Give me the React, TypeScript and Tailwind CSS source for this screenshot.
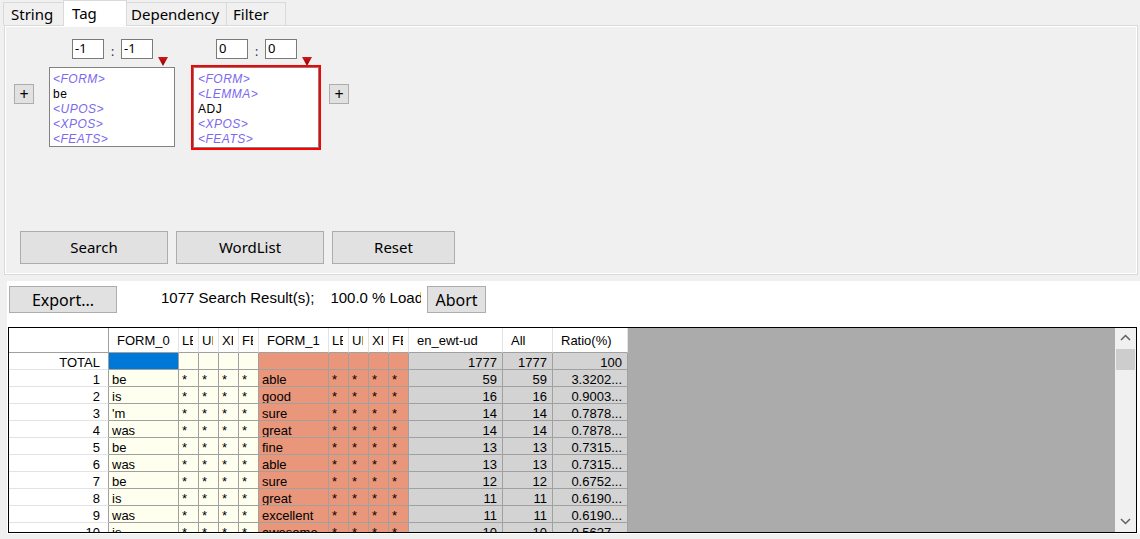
import React from "react";

type Col = { name: string; w: string; bg: string; narrow: boolean; num: boolean };

const COLS: Col[] = [
  { name: "FORM_0", w: "w-[70px]", bg: "bg-[#fffff0]", narrow: false, num: false },
  { name: "LEMMA_0", w: "w-[20px]", bg: "bg-[#fffff0]", narrow: true, num: false },
  { name: "UPOS_0", w: "w-[20px]", bg: "bg-[#fffff0]", narrow: true, num: false },
  { name: "XPOS_0", w: "w-[20px]", bg: "bg-[#fffff0]", narrow: true, num: false },
  { name: "FEATS_0", w: "w-[20px]", bg: "bg-[#fffff0]", narrow: true, num: false },
  { name: "FORM_1", w: "w-[70px]", bg: "bg-[#e9967a]", narrow: false, num: false },
  { name: "LEMMA_1", w: "w-[20px]", bg: "bg-[#e9967a]", narrow: true, num: false },
  { name: "UPOS_1", w: "w-[20px]", bg: "bg-[#e9967a]", narrow: true, num: false },
  { name: "XPOS_1", w: "w-[20px]", bg: "bg-[#e9967a]", narrow: true, num: false },
  { name: "FEATS_1", w: "w-[20px]", bg: "bg-[#e9967a]", narrow: true, num: false },
  { name: "en_ewt-ud", w: "w-[94px]", bg: "bg-[#d3d3d3]", narrow: false, num: true },
  { name: "All", w: "w-[50px]", bg: "bg-[#d3d3d3]", narrow: false, num: true },
  { name: "Ratio(%)", w: "w-[75px]", bg: "bg-[#d3d3d3]", narrow: false, num: true },
];

const DATA: string[][] = [
  ["1", "be", "able", "59", "59", "3.3202..."],
  ["2", "is", "good", "16", "16", "0.9003..."],
  ["3", "'m", "sure", "14", "14", "0.7878..."],
  ["4", "was", "great", "14", "14", "0.7878..."],
  ["5", "be", "fine", "13", "13", "0.7315..."],
  ["6", "was", "able", "13", "13", "0.7315..."],
  ["7", "be", "sure", "12", "12", "0.6752..."],
  ["8", "is", "great", "11", "11", "0.6190..."],
  ["9", "was", "excellent", "11", "11", "0.6190..."],
  ["10", "is", "awesome", "10", "10", "0.5627..."],
];

function Marker() {
  return (
    <svg width="10" height="9" viewBox="0 0 10 9">
      <defs>
        <linearGradient id="mk" x1="0" y1="0" x2="0" y2="1">
          <stop offset="0" stopColor="#d01818" />
          <stop offset="1" stopColor="#8a0000" />
        </linearGradient>
      </defs>
      <polygon points="0,0 10,0 5,9" fill="url(#mk)" />
    </svg>
  );
}

function SmallInput({ value }: { value: string }) {
  return (
    <div className="w-[32px] h-[20px] border border-[#7a7a7a] bg-white pl-[2px] text-[13px] leading-[17px] font-['Noto_Sans',sans-serif] text-black">
      {value}
    </div>
  );
}

function Ph({ t }: { t: string }) {
  return <div className="italic text-[#7b68ee] tracking-[0.5px]">{t}</div>;
}
function Val({ t }: { t: string }) {
  return <div className="text-black tracking-[0.5px]">{t}</div>;
}

function PlusBtn() {
  return (
    <div className="w-[20px] h-[20px] border border-[#adadad] bg-[#e1e1e1] flex items-center justify-center text-[16px] leading-[16px] font-['Noto_Sans',sans-serif] text-black">
      +
    </div>
  );
}

function Btn({ label, w }: { label: string; w: string }) {
  return (
    <div
      className={`${w} h-[33px] border border-[#adadad] bg-[#e1e1e1] flex items-center justify-center text-[15px] font-['Noto_Sans',sans-serif] text-black`}
    >
      {label}
    </div>
  );
}

function DataCell({ col, text, blue }: { col: Col; text: string; blue?: boolean }) {
  const bg = blue ? "bg-[#0078d7]" : col.bg;
  return (
    <div className={`${col.w} ${bg} shrink-0 h-[17px] border-r border-b border-[#a0a0a0] overflow-hidden`}>
      <div
        className={
          col.num
            ? "pt-[2px] leading-[16px] whitespace-nowrap text-right pr-[5px]"
            : "pt-[2px] leading-[16px] whitespace-nowrap pl-[3px]"
        }
      >
        {text}
      </div>
    </div>
  );
}

export default function App() {
  return (
    <div className="w-[1140px] h-[539px] bg-[#f0f0f0] overflow-hidden flex flex-col font-['Noto_Sans',sans-serif] text-black">
      {/* Tabs */}
      <div className="relative z-10 flex items-start h-[25px] pl-[3px] text-[15px] leading-[20px]">
        <div className="mt-[2px] h-[23px] w-[61px] border border-b-0 border-[#d9d9d9] bg-[#f0f0f0] pl-[7px] pt-[1px]">
          String
        </div>
        <div className="h-[26px] w-[64px] -ml-px border border-b-0 border-[#d9d9d9] bg-white pl-[8px] pt-[2px]">
          Tag
        </div>
        <div className="mt-[2px] h-[23px] w-[101px] -ml-px border border-b-0 border-[#d9d9d9] bg-[#f0f0f0] pl-[4px] pt-[1px]">
          Dependency
        </div>
        <div className="mt-[2px] h-[23px] w-[60px] -ml-px border border-b-0 border-[#d9d9d9] bg-[#f0f0f0] pl-[6px] pt-[1px]">
          Filter
        </div>
      </div>

      {/* Tab panel */}
      <div className="ml-[4px] w-[1134px] h-[250px] border border-[#d9d9d9] shrink-0">
        <div className="h-full border border-white flex flex-col">
          <div className="flex items-start pl-[8px]">
            <div className="mt-[57px]">
              <PlusBtn />
            </div>

            {/* token 0 */}
            <div className="ml-[15px] mt-[12px] w-[126px] flex flex-col">
              <div className="flex items-start pl-[23px] h-[20px]">
                <SmallInput value="-1" />
                <div className="w-[17px] text-center text-[12px] leading-[12px] pt-[7px] text-[#333]">:</div>
                <SmallInput value="-1" />
              </div>
              <div className="-mt-[2px] ml-[109px] h-[8px] overflow-visible">
                <Marker />
              </div>
              <div className="mt-[2px] w-[126px] h-[80px] border border-[#828282] bg-white pl-[3px] pt-[4px] text-[12px] leading-[15px] font-['Liberation_Sans',sans-serif]">
                <Ph t="<FORM>" />
                <Val t="be" />
                <Ph t="<UPOS>" />
                <Ph t="<XPOS>" />
                <Ph t="<FEATS>" />
              </div>
            </div>

            {/* token 1 */}
            <div className="ml-[16px] mt-[12px] flex flex-col">
              <div className="flex items-start pl-[25px] h-[20px]">
                <SmallInput value="0" />
                <div className="w-[17px] text-center text-[12px] leading-[12px] pt-[7px] text-[#333]">:</div>
                <SmallInput value="0" />
              </div>
              <div className="-mt-[2px] ml-[111px] h-[8px] overflow-visible">
                <Marker />
              </div>
              <div className="w-[130px] h-[85px] border-2 border-[#ff0000]">
                <div className="h-full border border-[#828282] bg-white pl-[4px] pt-[4px] text-[12px] leading-[15px] font-['Liberation_Sans',sans-serif]">
                  <Ph t="<FORM>" />
                  <Ph t="<LEMMA>" />
                  <Val t="ADJ" />
                  <Ph t="<XPOS>" />
                  <Ph t="<FEATS>" />
                </div>
              </div>
            </div>

            <div className="ml-[8px] mt-[57px]">
              <PlusBtn />
            </div>
          </div>

          <div className="mt-auto mb-[9px] pl-[14px] flex gap-[8px]">
            <Btn label="Search" w="w-[148px]" />
            <Btn label="WordList" w="w-[148px]" />
            <Btn label="Reset" w="w-[123px]" />
          </div>
        </div>
      </div>

      {/* Results area */}
      <div className="mt-[6px] ml-[7px] w-[1133px] h-[253px] bg-white flex flex-col shrink-0">
        <div className="flex items-start h-[32px]">
          <div className="ml-[2px] mt-[5px] w-[108px] h-[27px] border border-[#adadad] bg-[#e1e1e1] flex items-center justify-center text-[16px] font-['Noto_Sans',sans-serif]">
            Export...
          </div>
          <div className="ml-[44px] mt-[8px] w-[260px] overflow-hidden whitespace-nowrap flex text-[15px] leading-[17px] font-['Liberation_Sans',sans-serif]">
            <span>1077 Search Result(s);</span>
            <span className="ml-[16px]">100.0 % Loaded</span>
          </div>
          <div className="ml-[6px] mt-[5px] w-[59px] h-[27px] border border-[#adadad] bg-[#e1e1e1] flex items-center justify-center text-[16px] font-['Noto_Sans',sans-serif]">
            Abort
          </div>
        </div>

        {/* Grid */}
        <div className="mt-[14px] ml-[1px] w-[1129px] h-[206px] border border-black flex overflow-hidden font-['Liberation_Sans',sans-serif] text-[13px]">
          <div className="flex flex-col shrink-0">
            {/* header */}
            <div className="flex h-[25px]">
              <div className="w-[100px] h-[25px] border-r border-r-[#a0a0a0] border-b border-b-[#a0a0a0] bg-white shrink-0" />
              {COLS.map((c) => (
                <div
                  key={c.name}
                  className={`${c.w} h-[25px] shrink-0 bg-white border-r border-r-[#e3e3e3] border-b border-b-[#a0a0a0] overflow-hidden`}
                >
                  {c.narrow ? (
                    <div className="ml-[3px] w-[11px] overflow-hidden whitespace-nowrap pt-[3px] leading-[20px]">
                      {c.name}
                    </div>
                  ) : (
                    <div className="pl-[8px] whitespace-nowrap pt-[3px] leading-[20px]">{c.name}</div>
                  )}
                </div>
              ))}
            </div>
            {/* TOTAL */}
            <div className="flex">
              <div className="w-[100px] h-[17px] shrink-0 bg-white border-r border-r-[#a0a0a0] border-b border-b-[#e3e3e3] overflow-hidden">
                <div className="pt-[2px] leading-[16px] text-right pr-[8px]">TOTAL</div>
              </div>
              {COLS.map((c, i) => (
                <DataCell
                  key={c.name}
                  col={c}
                  blue={i === 0}
                  text={i === 10 ? "1777" : i === 11 ? "1777" : i === 12 ? "100" : ""}
                />
              ))}
            </div>
            {DATA.map((r) => (
              <div className="flex" key={r[0]}>
                <div className="w-[100px] h-[17px] shrink-0 bg-white border-r border-r-[#a0a0a0] border-b border-b-[#e3e3e3] overflow-hidden">
                  <div className="pt-[2px] leading-[16px] text-right pr-[8px]">{r[0]}</div>
                </div>
                {COLS.map((c, i) => {
                  let t = "*";
                  if (i === 0) t = r[1];
                  else if (i === 5) t = r[2];
                  else if (i === 10) t = r[3];
                  else if (i === 11) t = r[4];
                  else if (i === 12) t = r[5];
                  return <DataCell key={c.name} col={c} text={t} />;
                })}
              </div>
            ))}
          </div>
          <div className="flex-1 bg-[#ababab]" />
          <div className="w-[21px] bg-[#f0f0f0] flex flex-col shrink-0">
            <div className="h-[21px] flex items-center justify-center">
              <svg width="21" height="21" viewBox="0 0 21 21">
                <polyline points="6,12 10.5,7.5 15,12" fill="none" stroke="#606060" strokeWidth="1.5" />
              </svg>
            </div>
            <div className="h-[21px] mx-[1px] bg-[#cdcdcd]" />
            <div className="flex-1" />
            <div className="h-[21px] flex items-center justify-center">
              <svg width="21" height="21" viewBox="0 0 21 21">
                <polyline points="6,8 10.5,12.5 15,8" fill="none" stroke="#606060" strokeWidth="1.5" />
              </svg>
            </div>
          </div>
        </div>
      </div>
    </div>
  );
}
